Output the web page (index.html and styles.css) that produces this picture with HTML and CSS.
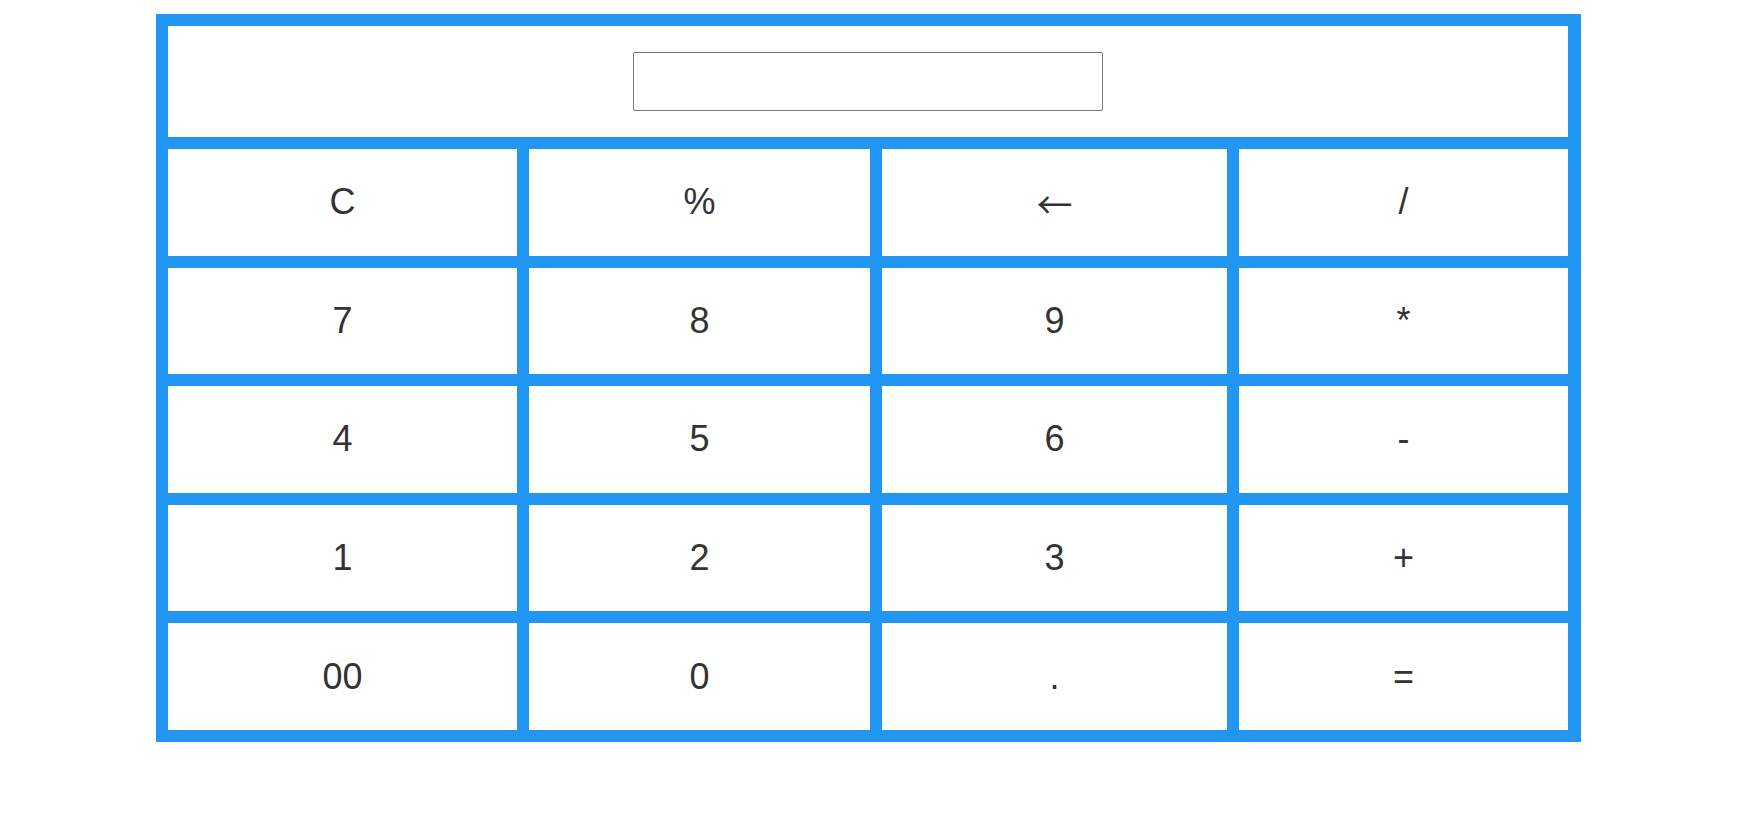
FILE: index.html
```html
<!DOCTYPE html>
<html lang="en">
<head>
<meta charset="utf-8">
<title>Calculator</title>
<link rel="stylesheet" href="styles.css">
</head>
<body>
<div class="calc">
  <div class="display"><input class="screen" type="text"></div>
  <div class="key">C</div>
  <div class="key">%</div>
  <div class="key key-arrow">←</div>
  <div class="key">/</div>
  <div class="key">7</div>
  <div class="key">8</div>
  <div class="key">9</div>
  <div class="key">*</div>
  <div class="key">4</div>
  <div class="key">5</div>
  <div class="key">6</div>
  <div class="key">-</div>
  <div class="key">1</div>
  <div class="key">2</div>
  <div class="key">3</div>
  <div class="key">+</div>
  <div class="key">00</div>
  <div class="key">0</div>
  <div class="key">.</div>
  <div class="key">=</div>
</div>
</body>
</html>
```
FILE: styles.css
```css
html, body {
  margin: 0;
  padding: 0;
  background: #ffffff;
}
body {
  font-family: "Liberation Sans", Arial, sans-serif;
}
.calc {
  box-sizing: border-box;
  margin: 14px 0 0 156px;
  width: 1425px;
  height: 728px;
  padding: 12px 13px 12px 12px;
  background: #2196f3;
  display: grid;
  grid-template-columns: 349px 341px 345px 329px;
  grid-template-rows: 111px repeat(5, 1fr);
  gap: 12px;
}
.display {
  grid-column: 1 / -1;
  background: #ffffff;
  display: flex;
  align-items: center;
  justify-content: center;
}
.screen {
  box-sizing: border-box;
  width: 470px;
  height: 59px;
  margin: 0;
  border: 1px solid #767676;
  border-radius: 2px;
  background: #ffffff;
  padding: 0 4px;
  font-size: 24px;
}
.key {
  background: #ffffff;
  display: flex;
  align-items: center;
  justify-content: center;
  font-size: 36px;
  color: #333333;
}
.key-arrow {
  font-family: "Noto Sans CJK JP", "DejaVu Sans", sans-serif;
  padding-top: 2px;
}
```
